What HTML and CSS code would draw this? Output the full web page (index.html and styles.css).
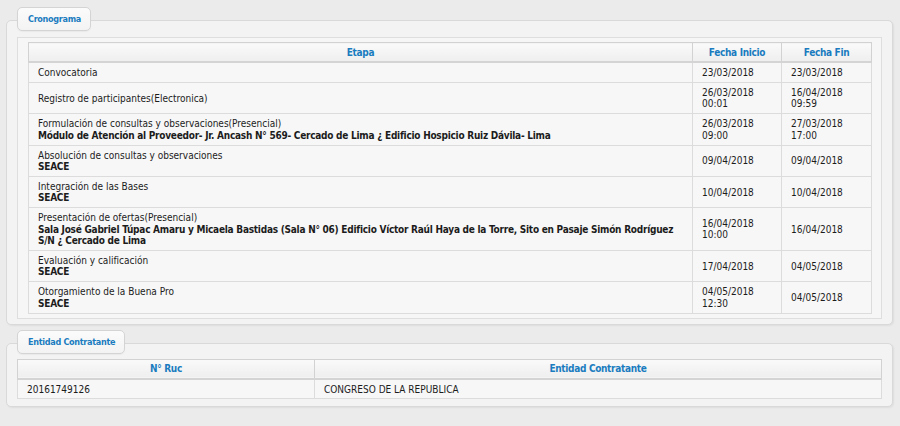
FILE: index.html
```html
<!DOCTYPE html>
<html lang="es">
<head>
<meta charset="utf-8">
<title>Cronograma</title>
<link rel="stylesheet" href="styles.css">
</head>
<body>
<section class="group">
  <div class="tab">Cronograma</div>
  <div class="box box-crono">
    <div class="inner">
      <table class="grid crono">
        <colgroup><col class="c-etapa"><col class="c-fecha"><col class="c-fecha2"></colgroup>
        <thead>
          <tr><th>Etapa</th><th>Fecha Inicio</th><th>Fecha Fin</th></tr>
        </thead>
        <tbody>
          <tr><td>Convocatoria</td><td>23/03/2018</td><td>23/03/2018</td></tr>
          <tr><td>Registro de participantes(Electronica)</td><td>26/03/2018<br>00:01</td><td>16/04/2018<br>09:59</td></tr>
          <tr><td>Formulación de consultas y observaciones(Presencial)<br><b>Módulo de Atención al Proveedor- Jr. Ancash N° 569- Cercado de Lima ¿ Edificio Hospicio Ruiz Dávila- Lima</b></td><td>26/03/2018<br>09:00</td><td>27/03/2018<br>17:00</td></tr>
          <tr><td>Absolución de consultas y observaciones<br><b>SEACE</b></td><td>09/04/2018</td><td>09/04/2018</td></tr>
          <tr><td>Integración de las Bases<br><b>SEACE</b></td><td>10/04/2018</td><td>10/04/2018</td></tr>
          <tr><td>Presentación de ofertas(Presencial)<br><b>Sala José Gabriel Túpac Amaru y Micaela Bastidas (Sala N° 06) Edificio Víctor Raúl Haya de la Torre, Sito en Pasaje Simón Rodríguez S/N ¿ Cercado de Lima</b></td><td>16/04/2018<br>10:00</td><td>16/04/2018</td></tr>
          <tr><td>Evaluación y calificación<br><b>SEACE</b></td><td>17/04/2018</td><td>04/05/2018</td></tr>
          <tr><td>Otorgamiento de la Buena Pro<br><b>SEACE</b></td><td>04/05/2018<br>12:30</td><td>04/05/2018</td></tr>
        </tbody>
      </table>
    </div>
  </div>
</section>
<section class="group group2">
  <div class="tab">Entidad Contratante</div>
  <div class="box box-ent">
    <table class="grid ent">
      <colgroup><col class="c-ruc"><col class="c-ent"></colgroup>
      <thead>
        <tr><th>N° Ruc</th><th>Entidad Contratante</th></tr>
      </thead>
      <tbody>
        <tr><td>20161749126</td><td>CONGRESO DE LA REPUBLICA</td></tr>
      </tbody>
    </table>
  </div>
</section>
</body>
</html>
```
FILE: styles.css
```css
html, body {
  margin: 0;
  padding: 0;
}
body {
  background: #ebebeb;
  font-family: "DejaVu Sans Condensed", "DejaVu Sans", sans-serif;
  font-size: 10px;
  color: #1c1c1c;
  padding-top: 7px;
  width: 900px;
  height: 426px;
  box-sizing: border-box;
  overflow: hidden;
}
.group {
  margin: 0 7px 0 6px;
}
.group2 {
  margin-top: 5px;
}
.tab {
  position: relative;
  z-index: 1;
  display: inline-block;
  margin-left: 11px;
  height: 22px;
  line-height: 22px;
  padding: 0 9px 0 10px;
  border: 1px solid #d4d4d4;
  border-radius: 5px;
  background: linear-gradient(#fbfbfb, #f3f3f3);
  color: #1a7cbf;
  font-size: 9px;
  font-weight: bold;
  letter-spacing: -0.3px;
  box-shadow: 0 1px 1px rgba(0,0,0,0.04);
}
.box {
  margin-top: -11px;
  border: 1px solid #d9d9d9;
  border-radius: 5px;
  background: #f3f3f3;
  box-shadow: 1px 1px 2px rgba(0,0,0,0.06);
}
.box-crono {
  padding: 16px 10px 5px 10px;
}
.box-ent {
  padding: 15px 10px 7px 10px;
}
.inner {
  border: 1px solid #dedede;
  background: #f6f6f6;
  padding: 4px 10px 4px 10px;
}
.grid {
  width: 100%;
  border-collapse: collapse;
  table-layout: fixed;
  border: 1px solid #cfcfcf;
}
.grid th {
  height: 18px;
  padding: 0;
  font-weight: bold;
  letter-spacing: -0.32px;
  color: #1a7cbf;
  text-align: center;
  background: linear-gradient(#fafafa, #eeeeee);
  border: 1px solid #d2d2d2;
  border-bottom: 2px solid #d4d4d4;
}
.grid td {
  padding: 4px 9px 3.5px 9px;
  line-height: 11.4px;
  vertical-align: middle;
  background: #f7f7f7;
  border: 1px solid #dcdcdc;
}
.grid td b {
  font-weight: bold;
  letter-spacing: -0.25px;
}
.c-etapa { width: 664px; }
.c-fecha { width: 89px; }
.c-fecha2 { width: 90px; }
.c-ruc { width: 297px; }
```
